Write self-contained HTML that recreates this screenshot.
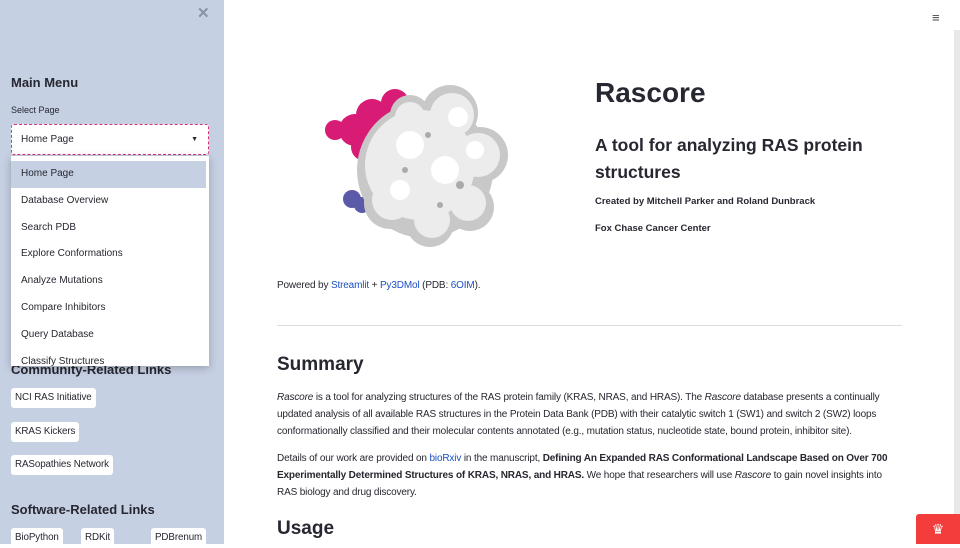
<!DOCTYPE html>
<html><head><meta charset="utf-8"><style>
*{margin:0;padding:0;box-sizing:border-box}
body{width:960px;height:544px;overflow:hidden;background:#fff;font-family:"Liberation Sans",sans-serif;color:#262730;position:relative}
.sb{position:absolute;left:0;top:0;width:224px;height:544px;background:#c6d0e3}
.abs{position:absolute}
.btn{position:absolute;background:#fff;border-radius:3px;font-size:9.8px;padding:0 4px;height:20px;line-height:20px;color:#262730;letter-spacing:-0.1px}
.dd{position:absolute;left:11px;top:156px;width:198px;height:210px;background:#fff;box-shadow:0 2px 8px rgba(0,0,0,.25);overflow:hidden}
.dd div{height:26.8px;line-height:26.8px;padding-left:10px;font-size:10px}
.main p{font-size:10px;line-height:17px;letter-spacing:-0.15px}
a{color:#1a4fc4}
</style></head><body>
<div class="sb">
<div class="abs" style="left:197px;top:4px;font-size:15px;color:#8a93a3;font-weight:bold">✕</div>
<div class="abs" style="left:11px;top:75px;font-size:13px;font-weight:bold">Main Menu</div>
<div class="abs" style="left:11px;top:105px;font-size:9px">Select Page</div>
<div class="abs" style="left:11px;top:124px;width:198px;height:31px;background:#fff;border:1px dashed #d6337a;border-radius:3px;font-size:10px;line-height:29px;padding-left:9px">Home Page<span style="position:absolute;right:10px;top:0;font-size:7px">▼</span></div>
<div class="abs" style="left:11px;top:362px;font-size:13px;font-weight:bold">Community-Related Links</div>
<div class="btn" style="left:11px;top:388px">NCI RAS Initiative</div>
<div class="btn" style="left:11px;top:422px">KRAS Kickers</div>
<div class="btn" style="left:11px;top:455px">RASopathies Network</div>
<div class="abs" style="left:11px;top:502px;font-size:13px;font-weight:bold">Software-Related Links</div>
<div class="btn" style="left:11px;top:528px">BioPython</div>
<div class="btn" style="left:81px;top:528px">RDKit</div>
<div class="btn" style="left:151px;top:528px">PDBrenum</div>
</div>
<div class="dd">
<div style="background:#c6d0e3;margin:5px 3px 0 0">Home Page</div>
<div>Database Overview</div><div>Search PDB</div><div>Explore Conformations</div><div>Analyze Mutations</div><div>Compare Inhibitors</div><div>Query Database</div><div>Classify Structures</div>
</div>
<svg class="abs" style="left:310px;top:75px" width="210" height="180">
<g fill="#d81b74"><circle cx="45" cy="55" r="16"/><circle cx="62" cy="40" r="16"/><circle cx="85" cy="28" r="14"/><circle cx="55" cy="72" r="14"/><circle cx="25" cy="55" r="10"/><circle cx="80" cy="45" r="14"/></g>
<g fill="#5a5aa8"><circle cx="42" cy="124" r="9"/><circle cx="52" cy="130" r="8"/></g>
<g fill="#c8c8c8"><circle cx="115" cy="95" r="68"/><circle cx="140" cy="38" r="28"/><circle cx="170" cy="80" r="28"/><circle cx="80" cy="128" r="26"/><circle cx="120" cy="148" r="24"/><circle cx="160" cy="132" r="24"/><circle cx="72" cy="85" r="22"/><circle cx="100" cy="40" r="20"/></g>
<g fill="#ececec"><circle cx="110" cy="90" r="55"/><circle cx="142" cy="40" r="22"/><circle cx="168" cy="80" r="22"/><circle cx="82" cy="125" r="20"/><circle cx="122" cy="145" r="18"/><circle cx="158" cy="128" r="18"/><circle cx="100" cy="42" r="15"/></g>
<g fill="#ffffff"><circle cx="100" cy="70" r="14"/><circle cx="135" cy="95" r="14"/><circle cx="90" cy="115" r="10"/><circle cx="148" cy="42" r="10"/><circle cx="165" cy="75" r="9"/></g>
<g fill="#aaa"><circle cx="118" cy="60" r="3"/><circle cx="150" cy="110" r="4"/><circle cx="95" cy="95" r="3"/><circle cx="130" cy="130" r="3"/></g>
</svg>
<div class="main">
<div class="abs" style="left:595px;top:77px;font-size:28px;font-weight:bold">Rascore</div>
<div class="abs" style="left:595px;top:132px;font-size:17.5px;font-weight:bold;line-height:27px;width:270px">A tool for analyzing RAS protein structures</div>
<div class="abs" style="left:595px;top:196px;font-size:9.5px;font-weight:bold">Created by Mitchell Parker and Roland Dunbrack</div>
<div class="abs" style="left:595px;top:223px;font-size:9.5px;font-weight:bold">Fox Chase Cancer Center</div>
<p class="abs" style="left:277px;top:277px">Powered by <a>Streamlit</a> + <a>Py3DMol</a> (PDB: <a>6OIM</a>).</p>
<div class="abs" style="left:277px;top:325px;width:625px;height:1px;background:#ddd"></div>
<div class="abs" style="left:277px;top:354px;font-size:19px;font-weight:bold">Summary</div>
<p class="abs" style="left:277px;top:389px;width:625px"><i>Rascore</i> is a tool for analyzing structures of the RAS protein family (KRAS, NRAS, and HRAS). The <i>Rascore</i> database presents a continually updated analysis of all available RAS structures in the Protein Data Bank (PDB) with their catalytic switch 1 (SW1) and switch 2 (SW2) loops conformationally classified and their molecular contents annotated (e.g., mutation status, nucleotide state, bound protein, inhibitor site).</p>
<p class="abs" style="left:277px;top:450px;width:625px">Details of our work are provided on <a>bioRxiv</a> in the manuscript, <b>Defining An Expanded RAS Conformational Landscape Based on Over 700 Experimentally Determined Structures of KRAS, NRAS, and HRAS.</b> We hope that researchers will use <i>Rascore</i> to gain novel insights into RAS biology and drug discovery.</p>
<div class="abs" style="left:277px;top:518px;font-size:19px;font-weight:bold">Usage</div>
</div>
<div class="abs" style="left:932px;top:10px;font-size:13px;color:#444">≡</div>
<div class="abs" style="left:954px;top:30px;width:6px;height:514px;background:#e8e8e8"></div>
<div class="abs" style="left:916px;top:514px;width:44px;height:30px;background:#f33c3c;border-radius:3px 0 0 0;color:#fff;font-size:14px;text-align:center;line-height:30px">♛</div>
</body></html>
